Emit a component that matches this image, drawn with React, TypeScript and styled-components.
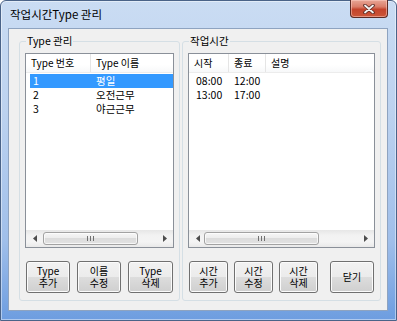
import React from "react";
import styled, { createGlobalStyle } from "styled-components";

type Column = { title: string; width?: number };

const GlobalStyle = createGlobalStyle`
  html, body {
    margin: 0;
    padding: 0;
    background: #ffffff;
  }
  body {
    font-family: "Noto Sans CJK KR", "Noto Sans", sans-serif;
    font-size: 10px;
    color: #000;
  }
`;

const typeColumns: Column[] = [{ title: "Type 번호", width: 65 }, { title: "Type 이름" }];
const typeRows = [
  ["1", "평일"],
  ["2", "오전근무"],
  ["3", "야근근무"],
];

const timeColumns: Column[] = [{ title: "시작", width: 40 }, { title: "종료", width: 37 }, { title: "설명" }];
const timeRows = [
  ["08:00", "12:00", ""],
  ["13:00", "17:00", ""],
];

const ListView = ({
  columns,
  rows,
  selected,
  thumbLeft,
  thumbWidth,
}: {
  columns: Column[];
  rows: string[][];
  selected?: number;
  thumbLeft: number;
  thumbWidth: number;
}) => (
  <ListBox>
    <Header>
      {columns.map((c, i) => (
        <HeadCell key={i} $width={c.width}>
          {c.title}
        </HeadCell>
      ))}
    </Header>
    <Body>
      {rows.map((r, i) => (
        <Row key={i} $selected={selected === i}>
          {r.map((cell, j) => (
            <Cell key={j} $width={columns[j].width ? columns[j].width! - (j === 0 ? 4 : 0) : undefined} $first={j === 0}>
              {cell}
            </Cell>
          ))}
        </Row>
      ))}
    </Body>
    <HScroll>
      <Arrow>
        <svg width="4" height="7" viewBox="0 0 4 7">
          <path d="M4 0 L0 3.5 L4 7 Z" fill="#4d4d4d" />
        </svg>
      </Arrow>
      <Track>
        <Thumb style={{ marginLeft: thumbLeft, width: thumbWidth }}>
          <svg width="7" height="5" viewBox="0 0 7 5">
            <path d="M0.5 0 V5 M3.5 0 V5 M6.5 0 V5" stroke="#707070" strokeWidth="1" />
          </svg>
        </Thumb>
      </Track>
      <Arrow>
        <svg width="4" height="7" viewBox="0 0 4 7">
          <path d="M0 0 L4 3.5 L0 7 Z" fill="#4d4d4d" />
        </svg>
      </Arrow>
    </HScroll>
  </ListBox>
);

const App = () => {
  return (
    <>
      <GlobalStyle />
      <Window>
        <TitleBar>
          <Title>작업시간Type 관리</Title>
          <CloseButton>
            <svg width="12" height="10" viewBox="0 0 12 10">
              <path d="M2 1.5 L10 8.5 M10 1.5 L2 8.5" stroke="#5a2a24" strokeWidth="3.6" strokeLinecap="round" />
              <path d="M2 1.5 L10 8.5 M10 1.5 L2 8.5" stroke="#f4f4f4" strokeWidth="1.8" strokeLinecap="round" />
            </svg>
          </CloseButton>
        </TitleBar>
        <Client>
          <Group $width={161}>
            <Legend>Type 관리</Legend>
            <ListView columns={typeColumns} rows={typeRows} selected={0} thumbLeft={0} thumbWidth={95} />
            <Buttons>
              <Button $width={44}>
                Type
                <br />
                추가
              </Button>
              <Button $width={44}>
                이름
                <br />
                수정
              </Button>
              <Button $width={45}>
                Type
                <br />
                삭제
              </Button>
            </Buttons>
          </Group>
          <Group $width={199}>
            <Legend>작업시간</Legend>
            <ListView columns={timeColumns} rows={timeRows} thumbLeft={-2} thumbWidth={115} />
            <Buttons>
              <Button $width={39}>
                시간
                <br />
                추가
              </Button>
              <Button $width={39}>
                시간
                <br />
                수정
              </Button>
              <Button $width={39}>
                시간
                <br />
                삭제
              </Button>
              <CloseDialog $width={44}>닫기</CloseDialog>
            </Buttons>
          </Group>
        </Client>
      </Window>
    </>
  );
};

const Window = styled.div`
  width: 397px;
  height: 321px;
  box-sizing: border-box;
  border: 1px solid #4a6388;
  border-radius: 6px 6px 0 0;
  background: linear-gradient(180deg, #cadcf3 0%, #bcd2ef 35%, #a0bfea 75%, #6d9de0 100%);
  padding: 0 8px 9px 7px;
  display: flex;
  flex-direction: column;
  box-shadow: inset 0 0 0 1px rgba(255, 255, 255, 0.45);
`;

const TitleBar = styled.div`
  height: 27px;
  display: flex;
  justify-content: space-between;
  align-items: flex-start;
`;

const Title = styled.div`
  margin: 6px 0 0 2px;
  font-size: 11.5px;
  line-height: 15px;
  color: #000;
`;

const CloseButton = styled.div`
  width: 38px;
  height: 18px;
  margin: -1px 0 0 0;
  box-sizing: border-box;
  border: 1px solid #5c2a24;
  border-top: none;
  border-radius: 0 0 4px 4px;
  background: linear-gradient(180deg, #e8a696 0%, #da7d69 40%, #c4442c 55%, #cc5639 100%);
  box-shadow: inset 0 0 0 1px rgba(255, 210, 200, 0.5);
  display: flex;
  align-items: center;
  justify-content: center;
`;

const Client = styled.div`
  flex: 1;
  display: flex;
  gap: 2px;
  border: 1px solid #8ea3c0;
  background: #f0f0f0;
  padding: 6px 6px 9px 10px;
`;

const Group = styled.fieldset<{ $width: number }>`
  width: ${(p) => p.$width}px;
  box-sizing: border-box;
  margin: 0;
  min-width: 0;
  border: 1px solid #d5dfe5;
  border-radius: 3px;
  padding: 6px 5px 7px 5px;
  display: flex;
  flex-direction: column;
`;

const Legend = styled.legend`
  margin-left: 1px;
  padding: 0 1px;
  line-height: 12px;
  font-size: 10.5px;
`;

const ListBox = styled.div`
  height: 195px;
  box-sizing: border-box;
  border: 1px solid #8a9099;
  background: #ffffff;
  display: flex;
  flex-direction: column;
`;

const Header = styled.div`
  height: 19px;
  box-sizing: border-box;
  display: flex;
  border-bottom: 1px solid #ececec;
  background: linear-gradient(180deg, #ffffff 0%, #ffffff 60%, #f7f8f9 100%);
`;

const HeadCell = styled.div<{ $width?: number }>`
  ${(p) => (p.$width ? `width: ${p.$width}px;` : "flex: 1;")}
  box-sizing: border-box;
  padding-left: 5px;
  border-right: 1px solid #e5e5e5;
  line-height: 18px;
  white-space: nowrap;
  &:last-child {
    border-right: none;
  }
`;

const Body = styled.div`
  flex: 1;
  padding-top: 1px;
`;

const Row = styled.div<{ $selected?: boolean }>`
  height: 14px;
  margin-left: 4px;
  display: flex;
  line-height: 14px;
  font-size: 10.5px;
  background: ${(p) => (p.$selected ? "#3399ff" : "transparent")};
  color: ${(p) => (p.$selected ? "#ffffff" : "#000000")};
`;

const Cell = styled.div<{ $width?: number; $first?: boolean }>`
  ${(p) => (p.$width ? `width: ${p.$width}px;` : "flex: 1;")}
  box-sizing: border-box;
  padding-left: ${(p) => (p.$first ? 3 : 5)}px;
  white-space: nowrap;
`;

const HScroll = styled.div`
  height: 17px;
  display: flex;
  background: linear-gradient(180deg, #e6e6e6 0%, #f2f2f2 30%, #f4f4f4 70%, #e9e9e9 100%);
`;

const Arrow = styled.div`
  width: 17px;
  display: flex;
  align-items: center;
  justify-content: center;
`;

const Track = styled.div`
  flex: 1;
  display: flex;
  align-items: center;
`;

const Thumb = styled.div`
  height: 13px;
  box-sizing: border-box;
  border: 1px solid #a2a2a2;
  border-radius: 3px;
  background: linear-gradient(180deg, #f6f6f6 0%, #ececec 50%, #dcdcdc 50%, #e2e2e2 100%);
  box-shadow: inset 0 0 0 1px rgba(255, 255, 255, 0.7);
  display: flex;
  align-items: center;
  justify-content: center;
`;

const Buttons = styled.div`
  margin-top: 13px;
  padding: 0 1px;
  display: flex;
  gap: 5px;
  justify-content: space-between;
`;

const Button = styled.div<{ $width: number }>`
  width: ${(p) => p.$width}px;
  height: 32px;
  box-sizing: border-box;
  border: 1px solid #707070;
  border-radius: 3px;
  background: linear-gradient(180deg, #f2f2f2 0%, #ebebeb 50%, #dddddd 50%, #cfcfcf 100%);
  box-shadow: inset 0 0 0 1px #fbfbfb;
  display: flex;
  align-items: center;
  justify-content: center;
  text-align: center;
  line-height: 12px;
  font-size: 10px;
`;

const CloseDialog = styled(Button)`
  margin-left: 6px;
`;

export default App;
